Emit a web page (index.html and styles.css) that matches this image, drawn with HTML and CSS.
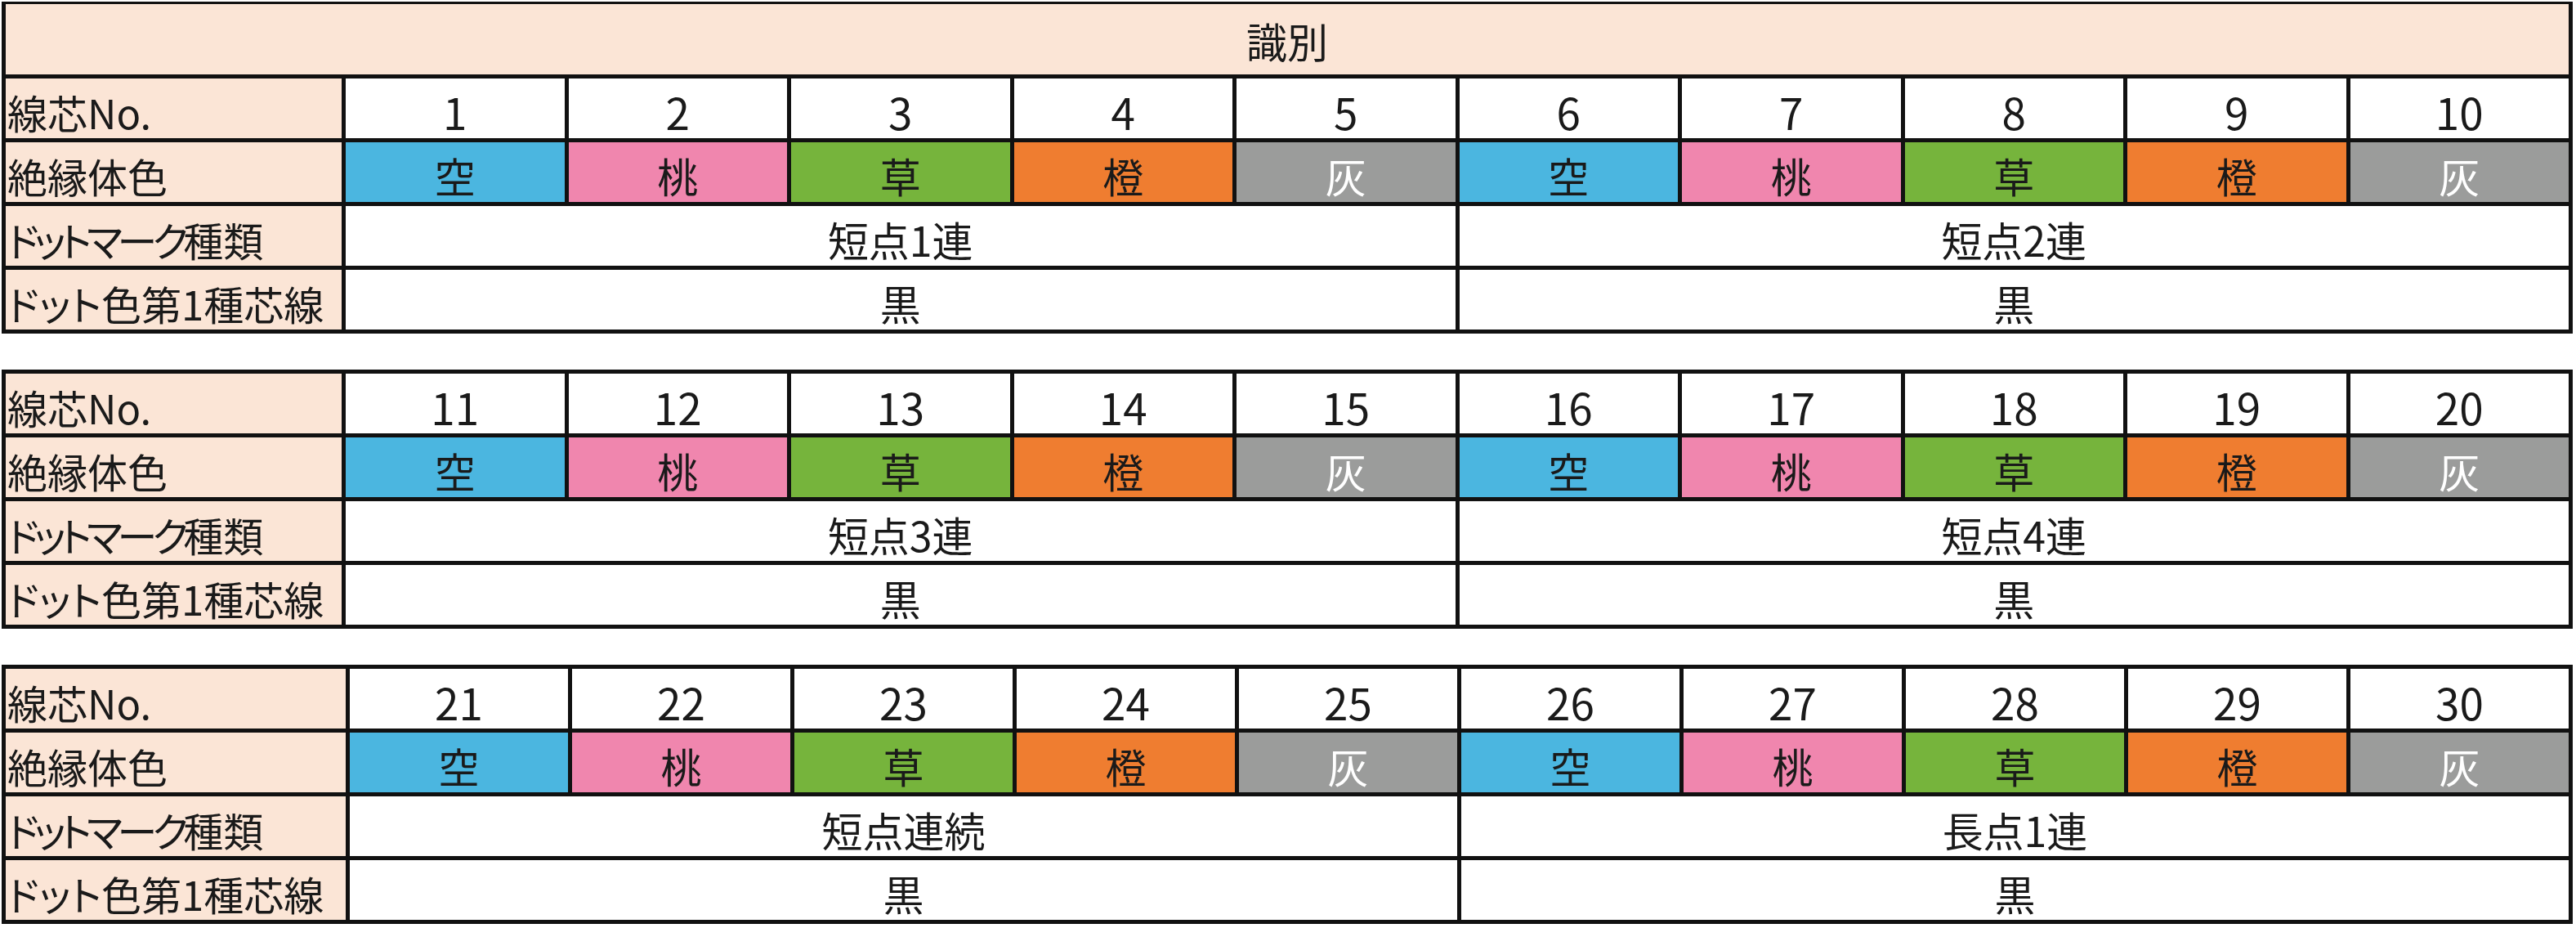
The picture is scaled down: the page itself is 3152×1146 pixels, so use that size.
FILE: index.html
```html
<!DOCTYPE html>
<html lang="ja">
<head>
<meta charset="utf-8">
<title>識別</title>
<link rel="stylesheet" href="styles.css">
</head>
<body>
<main class="sheet">
  <table class="spec">
    <colgroup><col class="c-label"><col span="10" class="c-data"></colgroup>
    <tr class="title-row"><th colspan="11" class="title">識別</th></tr>
    <tr><th class="label">線芯No.</th><td class="num">1</td><td class="num">2</td><td class="num">3</td><td class="num">4</td><td class="num">5</td><td class="num">6</td><td class="num">7</td><td class="num">8</td><td class="num">9</td><td class="num">10</td></tr>
    <tr><th class="label">絶縁体色</th><td class="sky">空</td><td class="peach">桃</td><td class="grass">草</td><td class="orange">橙</td><td class="ash">灰</td><td class="sky">空</td><td class="peach">桃</td><td class="grass">草</td><td class="orange">橙</td><td class="ash">灰</td></tr>
    <tr><th class="label"><span class="kana">ドットマーク</span>種類</th><td colspan="5">短点1連</td><td colspan="5">短点2連</td></tr>
    <tr><th class="label">ドット色第1種芯線</th><td colspan="5">黒</td><td colspan="5">黒</td></tr>
  </table>

  <table class="spec">
    <colgroup><col class="c-label"><col span="10" class="c-data"></colgroup>
    <tr><th class="label">線芯No.</th><td class="num">11</td><td class="num">12</td><td class="num">13</td><td class="num">14</td><td class="num">15</td><td class="num">16</td><td class="num">17</td><td class="num">18</td><td class="num">19</td><td class="num">20</td></tr>
    <tr><th class="label">絶縁体色</th><td class="sky">空</td><td class="peach">桃</td><td class="grass">草</td><td class="orange">橙</td><td class="ash">灰</td><td class="sky">空</td><td class="peach">桃</td><td class="grass">草</td><td class="orange">橙</td><td class="ash">灰</td></tr>
    <tr><th class="label"><span class="kana">ドットマーク</span>種類</th><td colspan="5">短点3連</td><td colspan="5">短点4連</td></tr>
    <tr><th class="label">ドット色第1種芯線</th><td colspan="5">黒</td><td colspan="5">黒</td></tr>
  </table>

  <table class="spec spec-wide">
    <colgroup><col class="c-label"><col span="10" class="c-data"></colgroup>
    <tr><th class="label">線芯No.</th><td class="num">21</td><td class="num">22</td><td class="num">23</td><td class="num">24</td><td class="num">25</td><td class="num">26</td><td class="num">27</td><td class="num">28</td><td class="num">29</td><td class="num">30</td></tr>
    <tr><th class="label">絶縁体色</th><td class="sky">空</td><td class="peach">桃</td><td class="grass">草</td><td class="orange">橙</td><td class="ash">灰</td><td class="sky">空</td><td class="peach">桃</td><td class="grass">草</td><td class="orange">橙</td><td class="ash">灰</td></tr>
    <tr><th class="label"><span class="kana">ドットマーク</span>種類</th><td colspan="5">短点連続</td><td colspan="5">長点1連</td></tr>
    <tr><th class="label">ドット色第1種芯線</th><td colspan="5">黒</td><td colspan="5">黒</td></tr>
  </table>
</main>
</body>
</html>
```

FILE: styles.css
```css
html, body {
  margin: 0;
  padding: 0;
  background: #ffffff;
}

body {
  font-family: "Noto Sans CJK JP", "Noto Sans", sans-serif;
  color: #1a1a1a;
}

.sheet {
  display: flex;
  flex-direction: column;
  gap: 44px;
  width: 3152px;
  padding: 2px 0 0 2px;
  box-sizing: border-box;
}

.spec {
  border-collapse: collapse;
  table-layout: fixed;
  width: 3146px;
  font-size: 50px;
  line-height: 1.1;
}

.c-label { width: 416px; }
.spec-wide .c-label { width: 421px; }

.spec th,
.spec td {
  border: 5px solid #111111;
  height: 65px;
  padding: 8px 0 0 0;
  text-align: center;
  vertical-align: middle;
  font-weight: 400;
  white-space: nowrap;
}

.spec .title-row th {
  height: 84px;
  padding-top: 2px;
  border-top-width: 3px;
}

.spec .title,
.spec .label {
  background: #fbe5d6;
}

.spec .label {
  text-align: left;
  padding-left: 2px;
  font-size: 49px;
  font-feature-settings: "palt";
}

.spec .kana {
  letter-spacing: -6px;
}

.spec .num {
  font-size: 53px;
}

.sky    { background: #4bb6e0; }
.peach  { background: #f086ae; }
.grass  { background: #76b43c; }
.orange { background: #ef7d30; }
.ash    { background: #9b9c9b; color: #ffffff; }
```
